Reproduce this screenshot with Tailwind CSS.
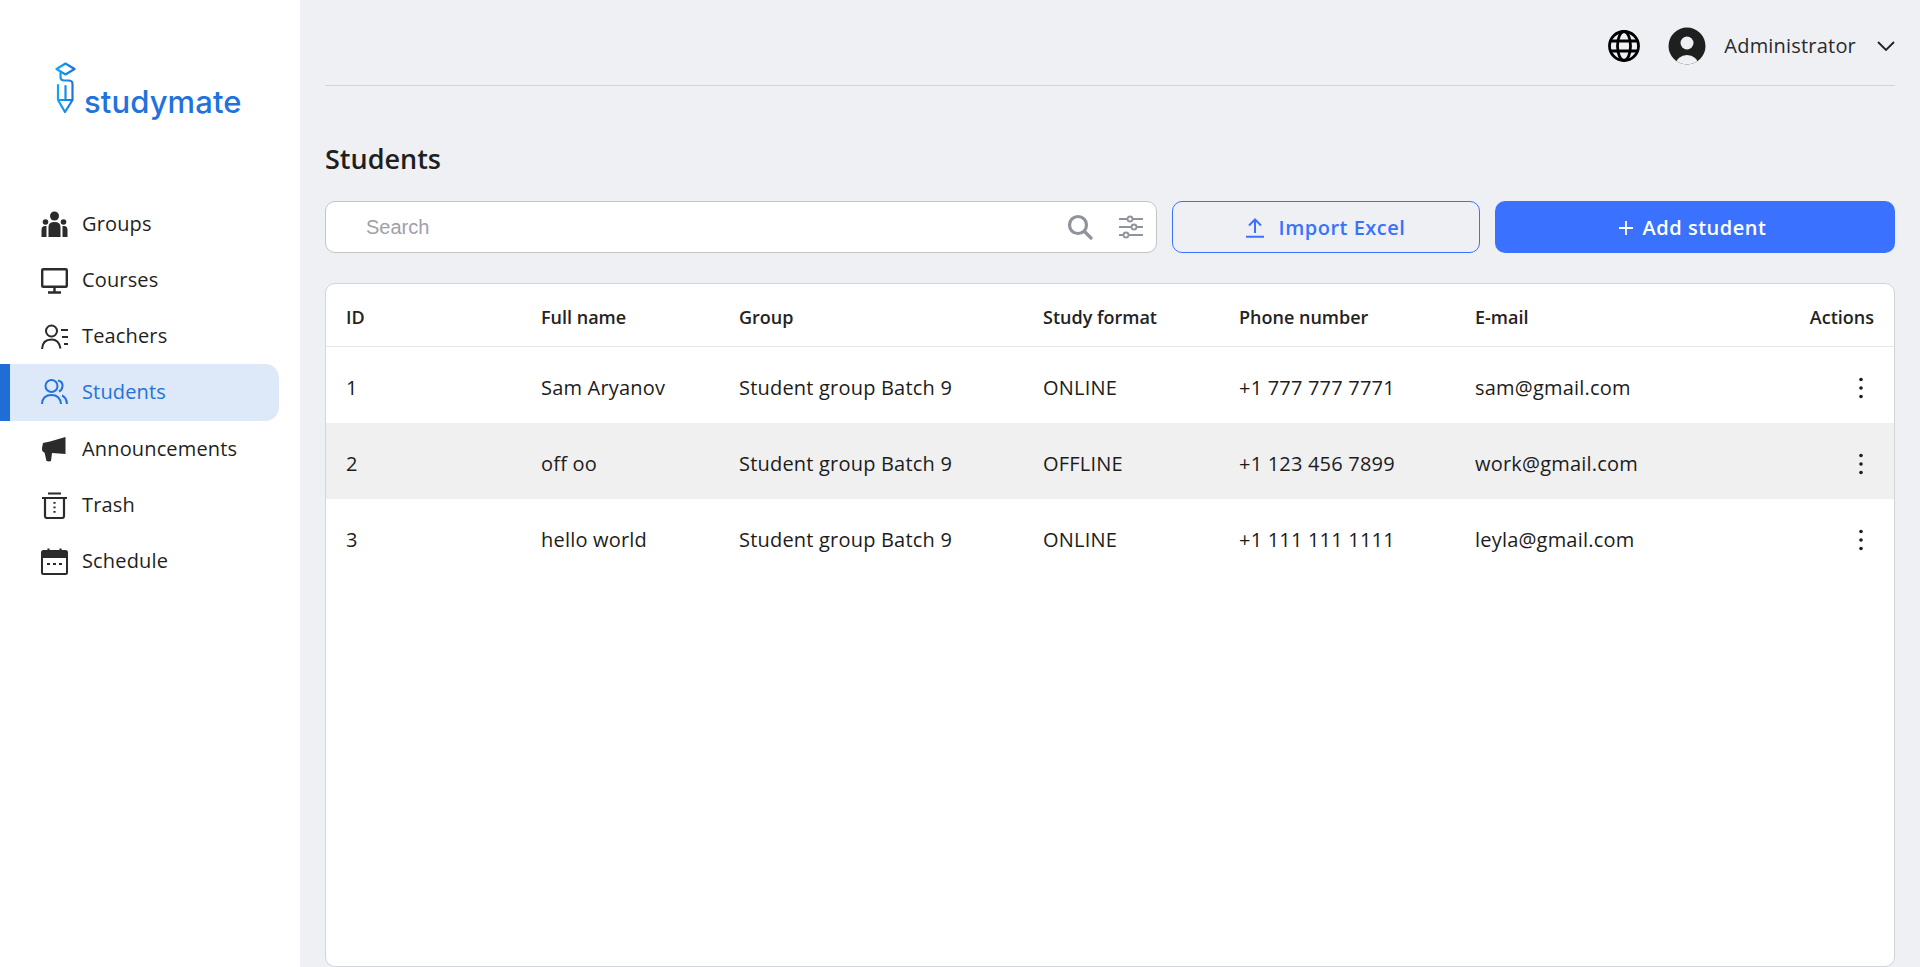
<!DOCTYPE html>
<html lang="en">
<head>
<meta charset="UTF-8">
<title>Studymate - Students</title>
<script src="https://cdn.jsdelivr.net/npm/@tailwindcss/browser@4"></script>
</head>
<body class="font-['Open_Sans',sans-serif] bg-[#eff0f4] text-[#1f1f1f] overflow-hidden">
<div class="flex h-[967px] overflow-hidden">

  <!-- Sidebar -->
  <aside class="w-[300px] shrink-0 bg-white">
    <div class="h-[196px] pt-[62px] pl-[55px]">
      <a href="#" class="flex items-end gap-[7px]">
        <svg width="22" height="52" viewBox="0 0 22 52" fill="none" stroke-width="2.2">
          <defs><linearGradient id="lg" x1="0" y1="0" x2="1" y2="0"><stop offset="0" stop-color="#12a8f2"/><stop offset="1" stop-color="#1f6fdc"/></linearGradient></defs>
          <path d="M1.5 7 L10.5 1.5 L19.5 7 L10.5 12.5 Z M5.5 9.5 V15 Q5.500 18.500 9 18.500 H13.500 Q17.500 18.500 17.500 22 V38 L10 50 L3 38 V23 M3 38 H17.500 M10.500 24 V38" stroke="url(#lg)" stroke-linejoin="round" stroke-linecap="round"/>
        </svg>
        <span class="font-['Inter',sans-serif] font-medium text-[31px] leading-[32px] tracking-[0.1px] text-[#2272dd] mb-[-4px]">studymate</span>
      </a>
    </div>
    <nav class="flex flex-col text-[20px] font-medium tracking-[0.15px]">
      <a href="#" class="h-[56px] flex items-center gap-[14px] pl-[41px]">
        <svg class="w-[27px] h-[27px] text-[#2b2b2b]" viewBox="0 0 27 27" fill="currentColor"><circle cx="13.500" cy="5" r="4.500"/><circle cx="4.500" cy="11" r="2.800"/><circle cx="22.500" cy="11" r="2.800"/><path d="M7.500 26 V16 Q7.500 11 13.500 11 Q19.500 11 19.500 16 V26 Z M0.500 26 V19 Q0.500 15 4 15 H5.500 V26 Z M26.500 26 V19 Q26.500 15 23 15 H21.500 V26 Z"/></svg>
        <span>Groups</span>
      </a>
      <a href="#" class="h-[56px] flex items-center gap-[14px] pl-[41px]">
        <svg class="w-[27px] h-[27px] text-[#2b2b2b]" viewBox="0 0 27 27" fill="none" stroke="currentColor" stroke-width="2.400"><rect x="1.200" y="2.200" width="24.600" height="17.600" rx="1"/><path d="M13.500 20 V25 M7 25.500 H20"/></svg>
        <span>Courses</span>
      </a>
      <a href="#" class="h-[56px] flex items-center gap-[14px] pl-[41px]">
        <svg class="w-[27px] h-[27px] text-[#2b2b2b]" viewBox="0 0 27 27" fill="none" stroke="currentColor" stroke-width="2"><circle cx="10.500" cy="8" r="5.500"/><path d="M1 26 Q1.500 16.500 10.500 16.500 Q18 16.500 19.500 25.500"/><path d="M20 7 H27 M21 14 H27 M23 21 H27"/></svg>
        <span>Teachers</span>
      </a>
      <a href="#" class="h-[57px] flex items-center gap-[14px] pl-[31px] pb-[2px] mr-[21px] border-l-[10px] border-[#1f6ed4] bg-[#dde8f8] rounded-r-[14px] text-[#2272dd]">
        <svg class="w-[27px] h-[27px]" viewBox="0 0 27 27" fill="none" stroke="currentColor" stroke-width="2"><circle cx="10.500" cy="8" r="6"/><path d="M1 26 Q1.500 17 10.500 17 Q19 17 20 26"/><path d="M17 2.500 Q22 3.500 21.500 8.500 Q21 12 18 13.500 M21 17.500 Q25.500 19.500 26 26"/></svg>
        <span>Students</span>
      </a>
      <a href="#" class="h-[56px] flex items-center gap-[14px] pl-[41px]">
        <svg class="w-[27px] h-[27px] text-[#2b2b2b]" viewBox="0 0 27 27" fill="currentColor"><path d="M24.500 1 V18 L11 17 L10 25 Q8 25.800 5.500 25 L3.500 16.500 Q0.800 16 1 12 L2 7 L9 5.500 Z"/></svg>
        <span>Announcements</span>
      </a>
      <a href="#" class="h-[56px] flex items-center gap-[14px] pl-[41px]">
        <svg class="w-[27px] h-[27px] text-[#2b2b2b]" viewBox="0 0 27 27" fill="none" stroke="currentColor" stroke-width="2.200"><path d="M1 6 H26 M7 1.500 H20 M4 6 V24 Q4 26 6 26 H21 Q23 26 23 24 V6"/><path d="M13.500 10 V11.800 M13.500 14.500 V16.300 M13.500 19 V20.800"/></svg>
        <span>Trash</span>
      </a>
      <a href="#" class="h-[56px] flex items-center gap-[14px] pl-[41px]">
        <svg class="w-[27px] h-[27px] text-[#2b2b2b]" viewBox="0 0 27 27" fill="none"><rect x="1" y="3" width="25" height="23" rx="1.500" stroke="currentColor" stroke-width="2"/><path d="M1 3.500 H26 V10 H1 Z" fill="currentColor"/><path d="M7.500 0.500 V4 M19.500 0.500 V4" stroke="currentColor" stroke-width="2.200"/><path d="M6 16 H9 M12 16 H15 M18 16 H21" stroke="currentColor" stroke-width="2.200"/></svg>
        <span>Schedule</span>
      </a>
    </nav>
  </aside>

  <!-- Main -->
  <main class="flex-1 min-w-0 pl-[25px] pr-[25px] flex flex-col">
    <header class="h-[86px] shrink-0 border-b border-[#d3d4d8] flex items-center justify-end pt-[6px]">
      <svg class="w-[32px] h-[32px] text-black" viewBox="0 0 32 32" fill="none" stroke="currentColor" stroke-width="2.800"><circle cx="16" cy="16" r="14.500"/><ellipse cx="16" cy="16" rx="6.500" ry="14.500"/><path d="M2.500 11 H29.500 M2.500 21 H29.500"/></svg>
      <svg class="w-[38px] h-[38px] ml-[28px]" viewBox="0 0 38 38"><defs><clipPath id="av"><circle cx="19" cy="19" r="18.500"/></clipPath></defs><circle cx="19" cy="19" r="18.500" fill="#1f1f1f"/><g clip-path="url(#av)"><circle cx="19" cy="16" r="6.500" fill="#eff0f4"/><ellipse cx="19" cy="37" rx="11" ry="9" fill="#eff0f4"/></g></svg>
      <span class="ml-[18px] text-[20px] tracking-[0.2px] text-[#2a2a2a]">Administrator</span>
      <svg class="w-[18px] h-[10px] ml-[21px] text-[#222]" viewBox="0 0 18 10" fill="none" stroke="currentColor" stroke-width="1.800"><path d="M1 1 L9 9 L17 1"/></svg>
    </header>

    <h1 class="mt-[55px] text-[27px] leading-[36px] font-semibold text-[#1f1f1f]">Students</h1>

    <div class="mt-[24px] flex gap-[15px] h-[52px] shrink-0">
      <div class="w-[832px] rounded-[10px] border border-[#c4c4c4] bg-white flex items-center pl-[40px] pr-[12px]">
        <input type="text" placeholder="Search" class="flex-1 min-w-0 font-['Liberation_Sans',sans-serif] text-[20px] outline-none placeholder:text-[#a0a0a8]">
        <svg class="w-[26px] h-[26px] text-[#8f939c]" viewBox="0 0 26 26" fill="none" stroke="currentColor" stroke-width="3.200"><circle cx="11" cy="11" r="8.500"/><path d="M17.500 17.500 L24 24" stroke-linecap="round"/></svg>
        <svg class="w-[26px] h-[26px] ml-[25px] text-[#8f939c]" viewBox="0 0 26 26" fill="none" stroke="currentColor" stroke-width="1.800"><path d="M1 5 H9 M15 5 H25 M1 13 H13 M19 13 H25 M1 21 H5 M11 21 H25" stroke-width="2.200"/><circle cx="12" cy="5" r="2.500"/><circle cx="16" cy="13" r="2.500"/><circle cx="8" cy="21" r="2.500"/></svg>
      </div>
      <button class="w-[308px] rounded-[10px] border border-[#3a72ff] text-[#3a72ff] flex items-center justify-center gap-[14px] pt-[2px] pr-[2px] text-[20px] font-semibold tracking-[0.5px]">
        <svg class="w-[20px] h-[20px]" viewBox="0 0 20 20" fill="none" stroke="currentColor" stroke-width="2"><path d="M10 15 V2 M4 7.500 L10 1.500 L16 7.500 M1 18.800 H19"/></svg>
        <span>Import Excel</span>
      </button>
      <button class="flex-1 rounded-[10px] bg-[#3a72ff] text-white flex items-center justify-center gap-[9px] pt-[2px] pr-[6px] text-[20px] font-semibold tracking-[0.5px]">
        <svg class="w-[16px] h-[16px]" viewBox="0 0 16 16" fill="none" stroke="currentColor" stroke-width="1.800"><path d="M8 1 V15 M1 8 H15"/></svg>
        <span>Add student</span>
      </button>
    </div>

    <div class="mt-[30px] flex-1 rounded-[10px] border border-[#d3d4d8] bg-white overflow-hidden">
      <table class="w-full table-fixed border-collapse text-left">
        <colgroup>
          <col class="w-[215px]"><col class="w-[198px]"><col class="w-[304px]"><col class="w-[196px]"><col class="w-[236px]"><col><col class="w-[110px]">
        </colgroup>
        <thead>
          <tr class="h-[62px] border-b-[1.500px] border-[#e8e8ea] text-[18px] text-[#232323] [&_th]:font-semibold [&_th]:pt-[5px]">
            <th class="pl-[20px]">ID</th><th>Full name</th><th>Group</th><th>Study format</th><th>Phone number</th><th>E-mail</th><th class="pr-[20px] text-right">Actions</th>
          </tr>
        </thead>
        <tbody class="text-[20px] tracking-[0.2px] text-[#1c1c1c] [&_td]:pt-[6px]">
          <tr class="h-[77px]">
            <td class="pl-[20px]">1</td><td>Sam Aryanov</td><td>Student group Batch 9</td><td>ONLINE</td><td>+1 777 777 7771</td><td>sam@gmail.com</td>
            <td class="pr-[30px]"><svg class="ml-auto w-[6px] h-[22px]" viewBox="0 0 6 22" fill="#1c1c1c"><circle cx="3" cy="2.500" r="1.800"/><circle cx="3" cy="11" r="1.800"/><circle cx="3" cy="19.500" r="1.800"/></svg></td>
          </tr>
          <tr class="h-[76px] bg-[#f0f0f0]">
            <td class="pl-[20px]">2</td><td>off oo</td><td>Student group Batch 9</td><td>OFFLINE</td><td>+1 123 456 7899</td><td>work@gmail.com</td>
            <td class="pr-[30px]"><svg class="ml-auto w-[6px] h-[22px]" viewBox="0 0 6 22" fill="#1c1c1c"><circle cx="3" cy="2.500" r="1.800"/><circle cx="3" cy="11" r="1.800"/><circle cx="3" cy="19.500" r="1.800"/></svg></td>
          </tr>
          <tr class="h-[76px]">
            <td class="pl-[20px]">3</td><td>hello world</td><td>Student group Batch 9</td><td>ONLINE</td><td>+1 111 111 1111</td><td>leyla@gmail.com</td>
            <td class="pr-[30px]"><svg class="ml-auto w-[6px] h-[22px]" viewBox="0 0 6 22" fill="#1c1c1c"><circle cx="3" cy="2.500" r="1.800"/><circle cx="3" cy="11" r="1.800"/><circle cx="3" cy="19.500" r="1.800"/></svg></td>
          </tr>
        </tbody>
      </table>
    </div>
  </main>
</div>
</body>
</html>
